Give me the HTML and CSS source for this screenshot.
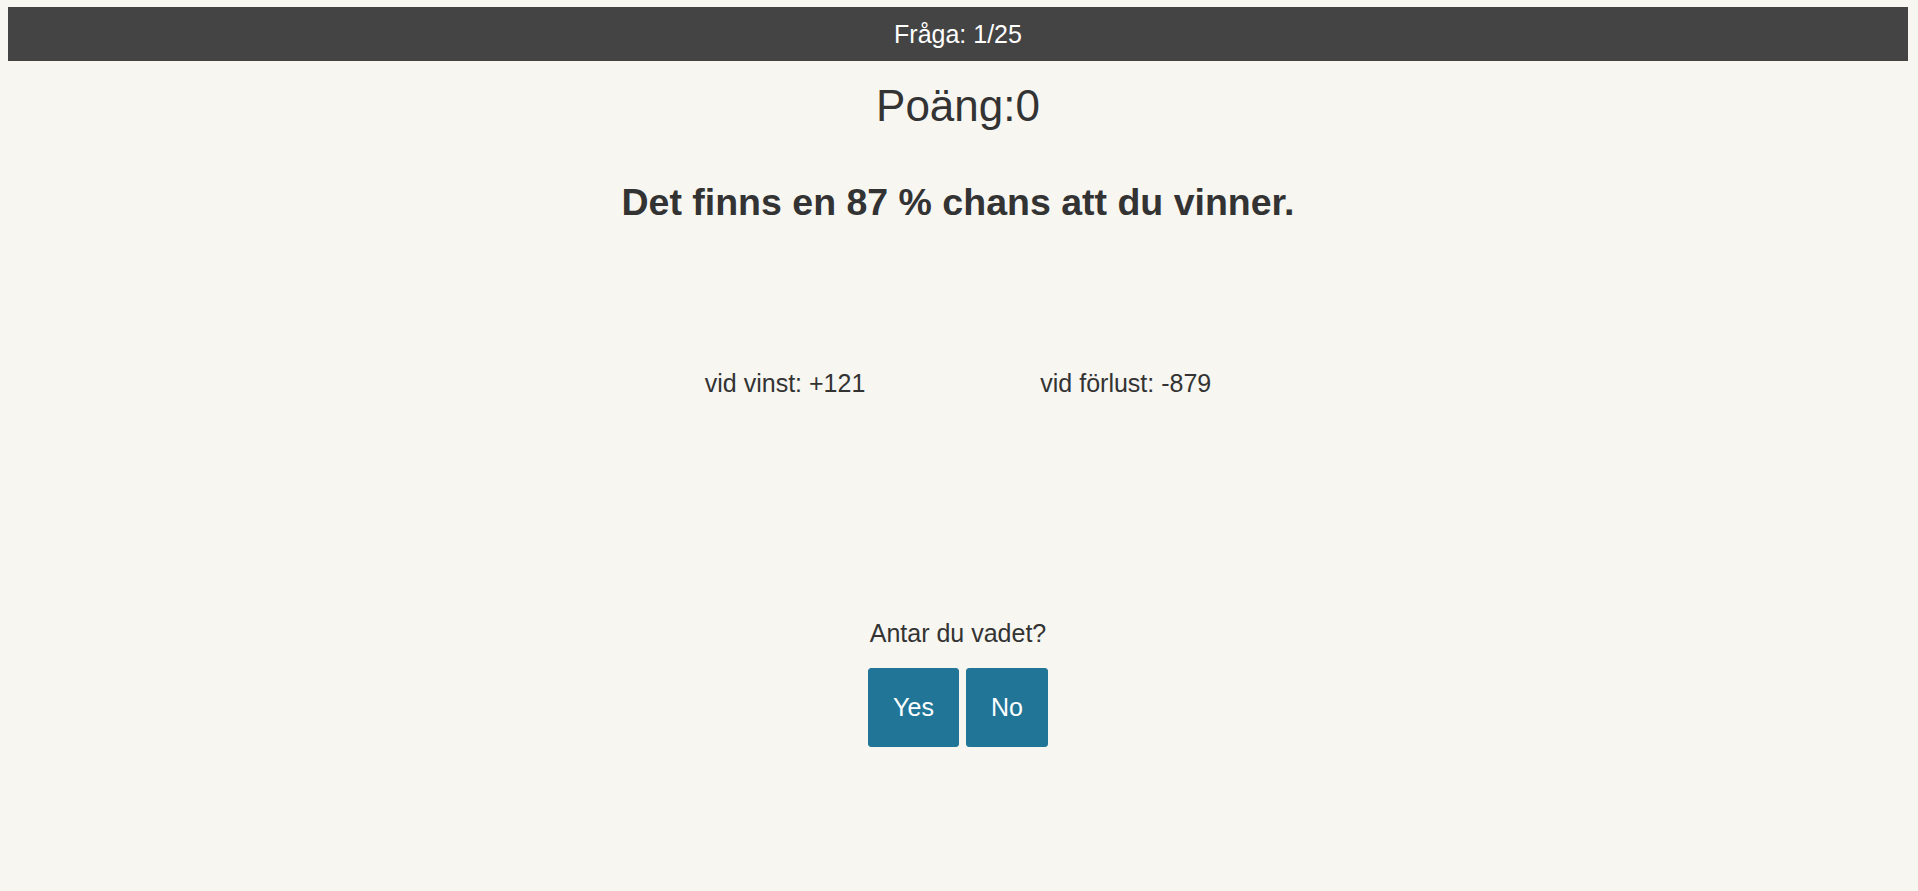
FILE: index.html
```html
<!DOCTYPE html>
<html lang="sv">
<head>
<meta charset="utf-8">
<title>Fråga 1/25</title>
<link rel="stylesheet" href="styles.css">
</head>
<body>
<header class="topbar">Fråga: 1/25</header>
<main class="quiz">
  <div class="score">Poäng:0</div>
  <h2 class="question">Det finns en 87 % chans att du vinner.</h2>
  <div class="outcomes">
    <span class="outcome">vid vinst: +121</span>
    <span class="outcome">vid förlust: -879</span>
  </div>
  <p class="prompt">Antar du vadet?</p>
  <div class="actions">
    <button class="btn" type="button">Yes</button>
    <button class="btn" type="button">No</button>
  </div>
</main>
</body>
</html>
```
FILE: styles.css
```css
html, body {
  background: #f7f6f1;
}
body {
  margin: 7px 10px 0 8px;
  font-family: "Liberation Sans", Arial, sans-serif;
  color: #333333;
  font-size: 25px;
  line-height: 1.15;
}
.topbar {
  background: #444444;
  color: #ffffff;
  height: 54px;
  line-height: 54px;
  text-align: center;
  font-size: 25px;
}
.quiz {
  display: flex;
  flex-direction: column;
  align-items: center;
  text-align: center;
}
.score {
  margin-top: 20px;
  font-size: 44px;
  line-height: 1.15;
}
.question {
  margin: 49px 0 0;
  font-size: 37.5px;
  font-weight: bold;
  line-height: 1.15;
}
.outcomes {
  margin-top: 145px;
  display: flex;
  justify-content: center;
  gap: 175px;
}
.prompt {
  margin: 222px 0 0;
}
.actions {
  margin-top: 20px;
  display: flex;
  gap: 7px;
}
.btn {
  font-family: "Liberation Sans", Arial, sans-serif;
  font-size: 25px;
  line-height: 1.15;
  color: #ffffff;
  background: #217698;
  border: 1px solid #217698;
  border-radius: 3px;
  padding: 24px 24px;
  cursor: pointer;
}
```
